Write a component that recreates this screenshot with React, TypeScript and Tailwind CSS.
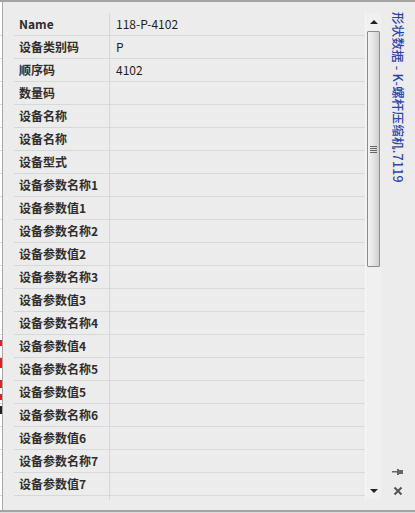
import React from 'react';

const rows: [string, string][] = [
  ['Name', '118-P-4102'],
  ['设备类别码', 'P'],
  ['顺序码', '4102'],
  ['数量码', ''],
  ['设备名称', ''],
  ['设备名称', ''],
  ['设备型式', ''],
  ['设备参数名称1', ''],
  ['设备参数值1', ''],
  ['设备参数名称2', ''],
  ['设备参数值2', ''],
  ['设备参数名称3', ''],
  ['设备参数值3', ''],
  ['设备参数名称4', ''],
  ['设备参数值4', ''],
  ['设备参数名称5', ''],
  ['设备参数值5', ''],
  ['设备参数名称6', ''],
  ['设备参数值6', ''],
  ['设备参数名称7', ''],
  ['设备参数值7', ''],
];

const font = { fontFamily: '"Noto Sans CJK SC", "Liberation Sans", sans-serif' };

export default function App() {
  return (
    <div
      className="w-[415px] h-[513px] flex flex-col overflow-hidden bg-[#ececec] border-t-2 border-[#a3a3a3] text-[12px]"
      style={font}
    >
      <div className="flex flex-1 min-h-0">
        {/* sliver of the drawing behind the docked panel */}
        <div className="w-[3px] bg-white border-r border-[#a8a8a8] flex flex-col pt-[11px] relative">
          {rows.map((_, i) => (
            <div key={i} className="h-[23px] border-b border-[#d8d8d8]" />
          ))}
          <div className="absolute left-0 top-[338px] w-[2px] h-[6px] bg-[#e02020]" />
          <div className="absolute left-0 top-[356px] w-[2px] h-[10px] bg-[#e02020]" />
          <div className="absolute left-0 top-[378px] w-[2px] h-[8px] bg-[#e02020]" />
          <div className="absolute left-0 top-[392px] w-[2px] h-[6px] bg-[#e02020]" />
          <div className="absolute left-0 top-[404px] w-[2px] h-[8px] bg-[#222]" />
        </div>

        {/* property table */}
        <div className="pl-[11px] pt-[11px] pb-[10px] flex">
          <div className="w-[351px] h-full overflow-hidden relative">
            <div className="absolute left-[95px] top-0 bottom-0 w-px bg-[#d6d6d6]" />
            {rows.map(([k, v], i) => (
              <div key={i} className="h-[23px] flex border-b border-[#d8d8d8]">
                <div className="w-[95px] pl-[5px] flex items-center font-bold text-[#2e2e2e] whitespace-nowrap">
                  {k}
                </div>
                <div className="flex-1 pl-[7px] flex items-center text-[#1e1e1e]">{v}</div>
              </div>
            ))}
          </div>
        </div>

        {/* scrollbar */}
        <div className="pt-[11px] pb-[11px] flex">
          <div className="w-px bg-[#f7f7f7]" />
          <div className="w-[15px] bg-[#f0f0f0] flex flex-col">
            <div className="h-[18px] flex items-center justify-center">
              <div className="w-0 h-0 border-l-[4px] border-r-[4px] border-b-[4px] border-l-transparent border-r-transparent border-b-[#222]" />
            </div>
            <div className="h-[236px] mx-[1px] border border-[#8c8c8c] rounded-[1px] bg-gradient-to-r from-[#f4f4f4] via-[#e4e4e4] to-[#cfcfcf] flex flex-col items-center justify-center gap-[1px]">
              <div className="w-[7px] h-px bg-[#666]" />
              <div className="w-[7px] h-px bg-[#666]" />
              <div className="w-[7px] h-px bg-[#666]" />
              <div className="w-[7px] h-px bg-[#666]" />
            </div>
            <div className="flex-1" />
            <div className="h-[16px] flex items-center justify-center">
              <div className="w-0 h-0 border-l-[4px] border-r-[4px] border-t-[4px] border-l-transparent border-r-transparent border-t-[#222]" />
            </div>
          </div>
        </div>

        {/* docked title bar */}
        <div className="flex-1 flex flex-col items-center pt-[10px] pb-[14px]">
          <div className="[writing-mode:vertical-rl] [text-orientation:sideways] text-[12.5px] leading-none font-medium tracking-[0.2px] text-[#2c44ad] whitespace-nowrap">
            形状数据 - K-螺杆压缩机.7119
          </div>
          <div className="flex-1" />
          <svg width="12" height="10" viewBox="0 0 12 10" className="mb-[9px]">
            <rect x="0" y="4" width="5" height="1.5" fill="#666" />
            <rect x="5" y="2" width="2" height="6" fill="#666" />
            <rect x="7" y="3" width="4" height="4" fill="#666" />
          </svg>
          <svg width="10" height="10" viewBox="0 0 10 10">
            <path d="M1.5 1.5 L8.5 8.5 M8.5 1.5 L1.5 8.5" stroke="#555" strokeWidth="2" />
          </svg>
        </div>
      </div>
      <div className="h-[2px] bg-[#a3a3a3]" />
      <div className="h-px bg-[#dcdcdc]" />
    </div>
  );
}
